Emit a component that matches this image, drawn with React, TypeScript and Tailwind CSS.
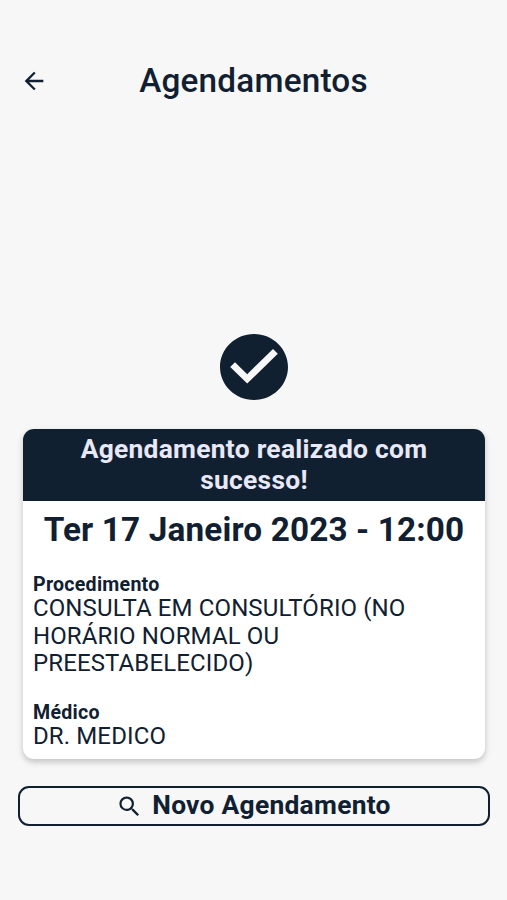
import { MdArrowBack, MdSearch } from 'react-icons/md'

const DETAILS = [
  {
    label: 'Procedimento',
    lines: ['CONSULTA EM CONSULTÓRIO (NO', 'HORÁRIO NORMAL OU', 'PREESTABELECIDO)'],
  },
  { label: 'Médico', lines: ['DR. MEDICO'] },
]

function Header() {
  return (
    <header className="grid h-[60px] grid-cols-[1fr_auto_1fr] items-center px-5">
      <button aria-label="Voltar" className="justify-self-start">
        <MdArrowBack size={28} />
      </button>
      <h1 className="whitespace-nowrap text-[33.3px] font-medium leading-10 tracking-[0.2px]">
        Agendamentos
      </h1>
    </header>
  )
}

function SuccessIcon() {
  return (
    <svg width="68" height="66" viewBox="2 2 20 20" preserveAspectRatio="none" fill="currentColor">
      <path d="M12 2C6.48 2 2 6.48 2 12s4.48 10 10 10 10-4.48 10-10S17.52 2 12 2zm-2 15l-5-5 1.41-1.41L10 14.17l7.59-7.59L19 8l-9 9z" />
    </svg>
  )
}

/** Confirmation card with the booked date and the appointment details. */
function AppointmentCard() {
  return (
    <section className="ml-[23px] h-[330px] w-[462px] overflow-hidden rounded-[11px] bg-white shadow-[0_3px_6px_rgba(0,0,0,0.22)]">
      <div className="h-[72px] bg-[#112031] pt-[5px] text-center text-[26.4px] font-bold leading-[31px] tracking-[0.27px] text-[#e8e8f8]">
        Agendamento realizado com
        <br />
        sucesso!
      </div>
      <h2 className="mt-[9px] whitespace-nowrap text-center text-[33.3px] font-bold leading-10 tracking-[0.15px]">
        Ter 17 Janeiro 2023 - 12:00
      </h2>
      <dl className="mt-[23px] space-y-[23px] px-[10px]">
        {DETAILS.map((d) => (
          <div key={d.label}>
            <dt className="text-[19.6px] font-bold leading-[23px] tracking-[0.25px]">{d.label}</dt>
            <dd className="-mt-px text-[24px] leading-[27.5px] tracking-[0.12px]">
              {d.lines.map((line) => (
                <span key={line} className="block whitespace-nowrap">
                  {line}
                </span>
              ))}
            </dd>
          </div>
        ))}
      </dl>
    </section>
  )
}

export default function App() {
  return (
    <main className="h-[900px] w-[507px] overflow-hidden bg-[#f7f7f7] pt-[51px] font-[Roboto,sans-serif] text-[#112031]">
      <Header />
      <div className="mt-[223px] flex justify-center">
        <SuccessIcon />
      </div>
      <div className="mt-[29px]">
        <AppointmentCard />
      </div>
      <button className="ml-[18px] mt-[27px] flex h-10 w-[472px] items-center justify-center gap-[9px] rounded-[11px] border-2 border-[#112031] pr-px text-[26.4px] font-bold tracking-[0.27px]">
        <MdSearch size={27} />
        Novo Agendamento
      </button>
    </main>
  )
}
